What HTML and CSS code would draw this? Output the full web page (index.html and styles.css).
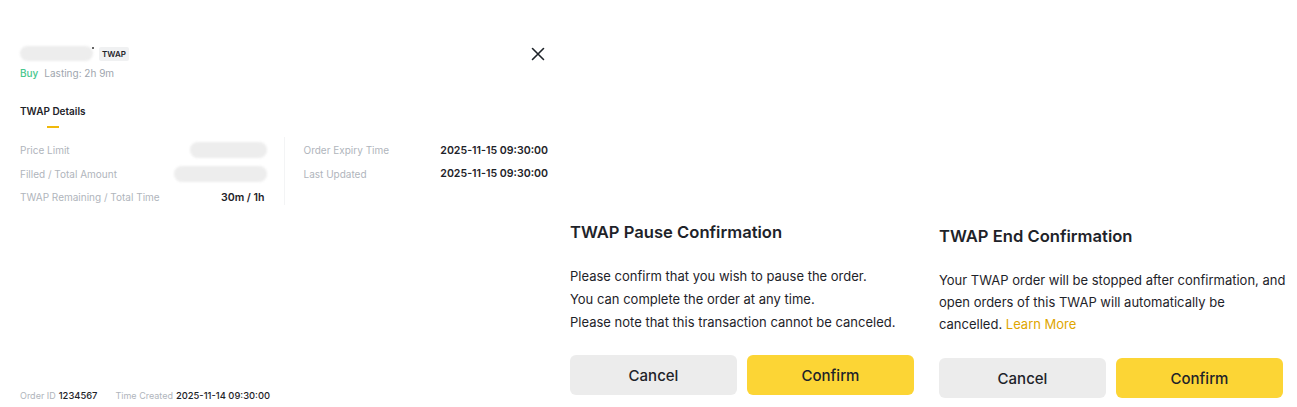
FILE: index.html
```html
<!DOCTYPE html>
<html lang="en">
<head>
<meta charset="utf-8">
<title>TWAP</title>
<link rel="stylesheet" href="styles.css">
</head>
<body>
<div class="page">
  <section class="order">
    <header class="order-head">
      <div class="head-text">
        <div class="title-line">
          <span class="symbol"><span class="blur blur-symbol"></span><span class="dot"></span></span>
          <span class="tag">TWAP</span>
        </div>
        <div class="sub">
          <span class="buy">Buy</span>
          <span class="lasting">Lasting: 2h 9m</span>
        </div>
      </div>
      <button class="close" aria-label="Close">
        <svg width="14" height="14" viewBox="0 0 14 14"><path d="M1.5 1.5L12.5 12.5M12.5 1.5L1.5 12.5" stroke="#1e2329" stroke-width="1.6" stroke-linecap="round"/></svg>
      </button>
    </header>
    <nav class="tabs"><span class="tab active">TWAP Details</span></nav>
    <div class="details">
      <div class="col">
        <div class="row"><span class="label">Price Limit</span><span class="blur blur-price"></span></div>
        <div class="row"><span class="label">Filled / Total Amount</span><span class="blur blur-filled"></span></div>
        <div class="row"><span class="label">TWAP Remaining / Total Time</span><span class="value">30m / 1h</span></div>
      </div>
      <div class="divider"></div>
      <div class="col">
        <div class="row"><span class="label">Order Expiry Time</span><span class="value">2025-11-15 09:30:00</span></div>
        <div class="row"><span class="label">Last Updated</span><span class="value">2025-11-15 09:30:00</span></div>
      </div>
    </div>
    <footer class="order-foot">
      <span class="meta"><span class="label">Order ID</span><span class="value">1234567</span></span>
      <span class="meta"><span class="label">Time Created</span><span class="value">2025-11-14 09:30:00</span></span>
    </footer>
  </section>

  <section class="dialog dialog-pause">
    <h2 class="dialog-title">TWAP Pause Confirmation</h2>
    <div class="dialog-body">
      <p>Please confirm that you wish to pause the order.</p>
      <p>You can complete the order at any time.</p>
      <p>Please note that this transaction cannot be canceled.</p>
    </div>
    <div class="actions">
      <button class="btn btn-cancel">Cancel</button>
      <button class="btn btn-confirm">Confirm</button>
    </div>
  </section>

  <section class="dialog dialog-end">
    <h2 class="dialog-title">TWAP End Confirmation</h2>
    <div class="dialog-body">
      <p>Your TWAP order will be stopped after confirmation, and open orders of this TWAP will automatically be cancelled. <a class="link" href="#">Learn More</a></p>
    </div>
    <div class="actions">
      <button class="btn btn-cancel">Cancel</button>
      <button class="btn btn-confirm">Confirm</button>
    </div>
  </section>
</div>
</body>
</html>
```

FILE: styles.css
```css
* { box-sizing: border-box; }
html, body { margin: 0; padding: 0; background: #fff; }
body {
  font-family: Inter, "Noto Sans", Arial, sans-serif;
  color: #1e2329;
  width: 1297px;
  height: 407px;
  overflow: hidden;
}
.page {
  display: flex;
  height: 407px;
}

/* ---------- order panel ---------- */
.order {
  width: 550px;
  padding: 46px 0 0 20px;
  display: flex;
  flex-direction: column;
  height: 407px;
}
.order-head {
  display: flex;
  justify-content: space-between;
  align-items: flex-start;
  width: 528px;
}
.title-line {
  display: flex;
  align-items: center;
  gap: 6px;
  height: 15px;
}
.symbol {
  position: relative;
  display: inline-flex;
}
.dot {
  position: absolute;
  right: -1px;
  top: 1px;
  width: 2px;
  height: 2px;
  background: #333;
  border-radius: 1px;
}
.blur {
  display: inline-block;
  background: #ededed;
  border-radius: 8px;
  filter: blur(1.2px);
}
.blur-symbol { width: 73px; height: 15px; }
.tag {
  font-size: 8px;
  font-weight: 600;
  background: #f0f1f2;
  color: #1e2329;
  padding: 2px 3px;
  line-height: 10px;
  border-radius: 2px;
}
.sub {
  margin-top: 5px;
  font-size: 10px;
  line-height: 14px;
  display: flex;
  gap: 6px;
}
.buy { color: #48c78e; font-weight: 500; }
.lasting { color: #a0a6ae; }
.close {
  border: 0;
  background: none;
  padding: 0;
  margin: 1px 3px 0 0;
  width: 14px;
  height: 14px;
  display: flex;
}
.tabs {
  margin-top: 24px;
  display: flex;
}
.tab {
  font-size: 10px;
  font-weight: 600;
  line-height: 14px;
  position: relative;
  padding-bottom: 10px;
}
.tab.active::after {
  content: "";
  position: absolute;
  left: 50%;
  bottom: 0;
  width: 12px;
  height: 2px;
  margin-left: -6px;
  background: #f0b90b;
}
.details {
  margin-top: 13px;
  display: flex;
  width: 528px;
  gap: 19px;
  align-items: stretch;
}
.col {
  flex: 1;
  display: flex;
  flex-direction: column;
  gap: 9.5px;
  padding-top: 2px;
}
.divider {
  width: 1px;
  height: 68px;
  margin-top: -4px;
  background: #f3f4f5;
}
.row {
  display: flex;
  justify-content: space-between;
  align-items: center;
  height: 14px;
  font-size: 10px;
}
.label { color: #b0b5bc; }
.value { color: #1e2329; font-weight: 600; font-size: 10.6px; }
.blur-price { width: 77px; height: 16px; margin-right: -2px; }
.blur-filled { width: 93px; height: 16px; margin-right: -2px; }

.order-foot {
  margin-top: auto;
  margin-bottom: 5px;
  display: flex;
  gap: 18px;
  font-size: 9px;
  line-height: 12px;
}
.order-foot .value { font-size: 9.4px; font-weight: 500; }
.meta { display: flex; gap: 3px; align-items: baseline; }

/* ---------- dialogs ---------- */
.dialog {
  width: 344px;
  display: flex;
  flex-direction: column;
}
.dialog-pause { margin-left: 20px; padding-top: 221px; }
.dialog-end { margin-left: 25px; padding-top: 225px; }
.dialog-title {
  margin: 0;
  font-size: 16.6px;
  line-height: 22px;
  font-weight: 600;
}
.dialog-body {
  font-size: 13px;
  color: #1e2329;
}
.dialog-pause .dialog-body { margin-top: 22px; line-height: 23px; }
.dialog-end .dialog-body { margin-top: 22px; line-height: 22px; margin-right: -3px; }
.dialog-body p { margin: 0; }
.link { color: #e0a600; text-decoration: none; }
.actions {
  display: flex;
  gap: 10px;
}
.dialog-pause .actions { margin-top: 21px; }
.dialog-end .actions { margin-top: 23px; }
.btn {
  flex: 1;
  height: 40px;
  border: 0;
  border-radius: 6px;
  font-family: inherit;
  font-size: 15px;
  font-weight: 500;
  color: #1e2329;
}
.btn-cancel { background: #ececec; }
.btn-confirm { background: #fcd535; }
```
